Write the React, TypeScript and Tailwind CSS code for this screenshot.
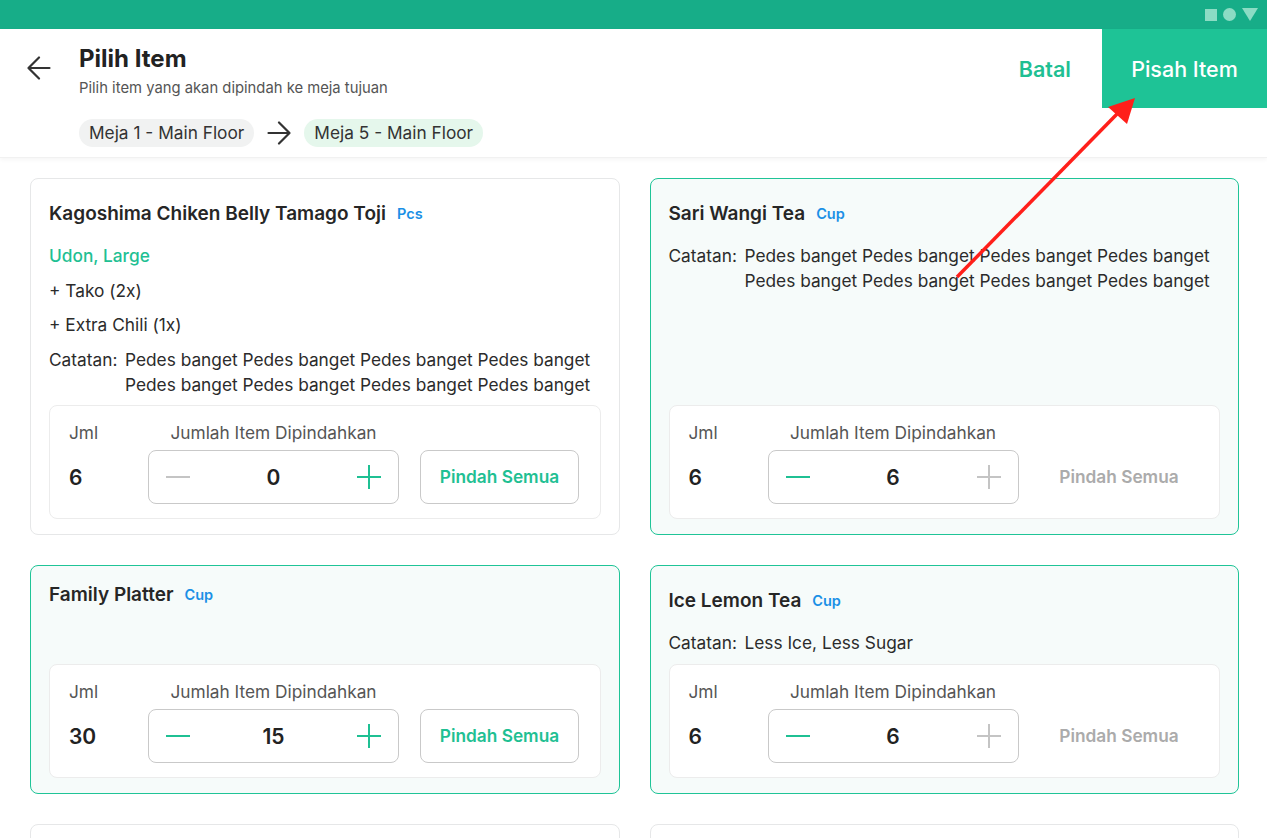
type Item = {
  name: string;
  unit: string;
  variant?: string;
  addons?: string[];
  note?: string;
  qty: number;
  moved: number;
};

const ITEMS: Item[] = [
  {
    name: 'Kagoshima Chiken Belly Tamago Toji',
    unit: 'Pcs',
    variant: 'Udon, Large',
    addons: ['Tako (2x)', 'Extra Chili (1x)'],
    note: 'Pedes banget Pedes banget Pedes banget Pedes banget Pedes banget Pedes banget Pedes banget Pedes banget',
    qty: 6,
    moved: 0,
  },
  {
    name: 'Sari Wangi Tea',
    unit: 'Cup',
    note: 'Pedes banget Pedes banget Pedes banget Pedes banget Pedes banget Pedes banget Pedes banget Pedes banget',
    qty: 6,
    moved: 6,
  },
  { name: 'Family Platter', unit: 'Cup', qty: 30, moved: 15 },
  { name: 'Ice Lemon Tea', unit: 'Cup', note: 'Less Ice, Less Sugar', qty: 6, moved: 6 },
  { name: 'Chicken Katsu Curry', unit: 'Pcs', qty: 2, moved: 0 },
  { name: 'Mineral Water', unit: 'Btl', qty: 4, moved: 0 },
];

// thin line arrows, 24px box with the glyph filling it
function LineArrow({ dir, className }: { dir: 'left' | 'right'; className?: string }) {
  const d = dir === 'left' ? 'M22.5 12H1.5M12 1.5 1.5 12 12 22.5' : 'M1.5 12H22.5M12 1.5 22.5 12 12 22.5';
  return (
    <svg className={className} width="24" height="24" viewBox="0 0 24 24" fill="none">
      <path d={d} stroke="currentColor" strokeWidth="2.2" strokeLinecap="round" strokeLinejoin="round" />
    </svg>
  );
}

function StepIcon({ plus, active }: { plus?: boolean; active: boolean }) {
  return (
    <svg
      className={active ? 'text-[#1fc093]' : 'text-[#c4c4c4]'}
      width="24"
      height="24"
      viewBox="0 0 24 24"
      fill="none"
    >
      <path d={plus ? 'M0 12H24M12 0V24' : 'M0 12H24'} stroke="currentColor" strokeWidth="2" />
    </svg>
  );
}

function ItemCard({ item }: { item: Item }) {
  const selected = item.moved > 0;
  const canMinus = item.moved > 0;
  const canPlus = item.moved < item.qty;
  const hasDetails = !!(item.variant || item.addons || item.note);

  return (
    <div
      className={
        (selected ? 'border-[#1fc497] bg-[#f6fbfa] ' : 'border-[#e6e7e8] bg-white ') +
        (hasDetails ? 'pt-[21px] ' : 'pt-[15px] ') +
        'flex flex-col rounded-lg border px-[18px] pb-[15px]'
      }
    >
      <div className="flex items-center gap-[11px] h-7">
        <span className="text-[19px] font-semibold text-[#262626]">{item.name}</span>
        <span className="text-[14.5px] font-semibold text-[#1b90e6]">{item.unit}</span>
      </div>

      {hasDetails && (
        <div className="flex flex-col gap-[9.5px] mt-[15px] text-[17.3px] leading-[25px] text-[#2b2b2b]">
          {item.variant && <div className="font-medium text-[#1fc093]">{item.variant}</div>}
          {item.addons?.map((a) => (
            <div key={a}>+ {a}</div>
          ))}
          {item.note && (
            <div className="flex">
              <span className="shrink-0 w-[76px]">Catatan:</span>
              <span>{item.note}</span>
            </div>
          )}
        </div>
      )}

      <div className="mt-auto pt-[8.5px]">
        <div className="rounded-lg border border-[#ececec] bg-white pl-[19px] pt-[15px] pb-[14px]">
          <div className="grid grid-cols-[79px_251px_180px] gap-y-[5px] items-center">
            <span className="text-[17.3px] leading-6 text-[#555]">Jml</span>
            <span className="text-[17.3px] leading-6 text-[#555] text-center">Jumlah Item Dipindahkan</span>
            <span />

            <span className="text-[21px] font-semibold text-[#222] pt-[2px]">{item.qty}</span>
            <div className="h-[54px] rounded-lg border border-[#c9c9c9] flex items-center justify-between px-[17px]">
              <StepIcon active={canMinus} />
              <span className="text-[21px] font-semibold text-[#222] pt-[2px]">{item.moved}</span>
              <StepIcon plus active={canPlus} />
            </div>
            <button
              className={
                (canPlus ? 'border border-[#c9c9c9] text-[#1fc093] ' : 'text-[#ababab] ') +
                'justify-self-end w-[159px] h-[54px] rounded-lg text-[17.3px] font-semibold'
              }
            >
              Pindah Semua
            </button>
          </div>
        </div>
      </div>
    </div>
  );
}

export default function App() {
  return (
    <div className="relative h-screen w-full overflow-hidden bg-white font-['Inter',sans-serif] flex flex-col">
      {/* status bar */}
      <div className="h-[29px] shrink-0 bg-[#17ad88] flex items-center justify-end gap-[6px] pr-[9px]">
        <div className="w-[12px] h-[12px] bg-[#8cdcc4]" />
        <div className="w-[13px] h-[13px] rounded-full bg-[#8cdcc4]" />
        <svg width="16" height="13" viewBox="0 0 16 13">
          <polygon points="0,0 16,0 8,13" fill="#8cdcc4" />
        </svg>
      </div>

      {/* header */}
      <div className="shrink-0 flex justify-between bg-white shadow-[0_2px_4px_rgba(0,0,0,0.04)] border-b border-[#f1f1f1]">
        <div className="flex pl-[27px] pt-4 pb-[10px]">
          <LineArrow dir="left" className="mt-[11px] text-[#333]" />
          <div className="ml-[28px] flex flex-col">
            <h1 className="text-[24px] leading-7 font-bold text-[#222]">Pilih Item</h1>
            <p className="mt-[5px] text-[14.8px] leading-5 text-[#555]">Pilih item yang akan dipindah ke meja tujuan</p>
            <div className="mt-[21px] flex items-center gap-[13px]">
              <span className="h-7 px-[10px] rounded-full bg-[#f1f2f2] text-[17.3px] leading-7 text-[#333]">
                Meja 1 - Main Floor
              </span>
              <LineArrow dir="right" className="text-[#333]" />
              <span className="h-7 px-[10px] rounded-full bg-[#e5f7ec] text-[17.3px] leading-7 text-[#333]">
                Meja 5 - Main Floor
              </span>
            </div>
          </div>
        </div>
        <div className="flex items-start">
          <button className="h-[79px] px-[31px] pt-[2px] text-[21.5px] font-semibold text-[#1fbf93]">Batal</button>
          <button className="h-[79px] w-[165px] pt-[2px] bg-[#1ec396] text-[21.5px] font-medium text-white">
            Pisah Item
          </button>
        </div>
      </div>

      {/* items */}
      <div className="flex-1 overflow-hidden pl-[30px] pr-[28px] pt-[20px]">
        <div className="grid grid-cols-2 gap-[30px]">
          {ITEMS.map((item) => (
            <ItemCard key={item.name} item={item} />
          ))}
        </div>
      </div>

      {/* pointer arrow */}
      <svg className="absolute inset-0 pointer-events-none" width="1267" height="838" viewBox="0 0 1267 838">
        <line x1="957" y1="277" x2="1118" y2="113" stroke="#ff1f1a" strokeWidth="3.5" />
        <polygon points="1135,98 1108,107 1127,124" fill="#ff1f1a" />
      </svg>
    </div>
  );
}
